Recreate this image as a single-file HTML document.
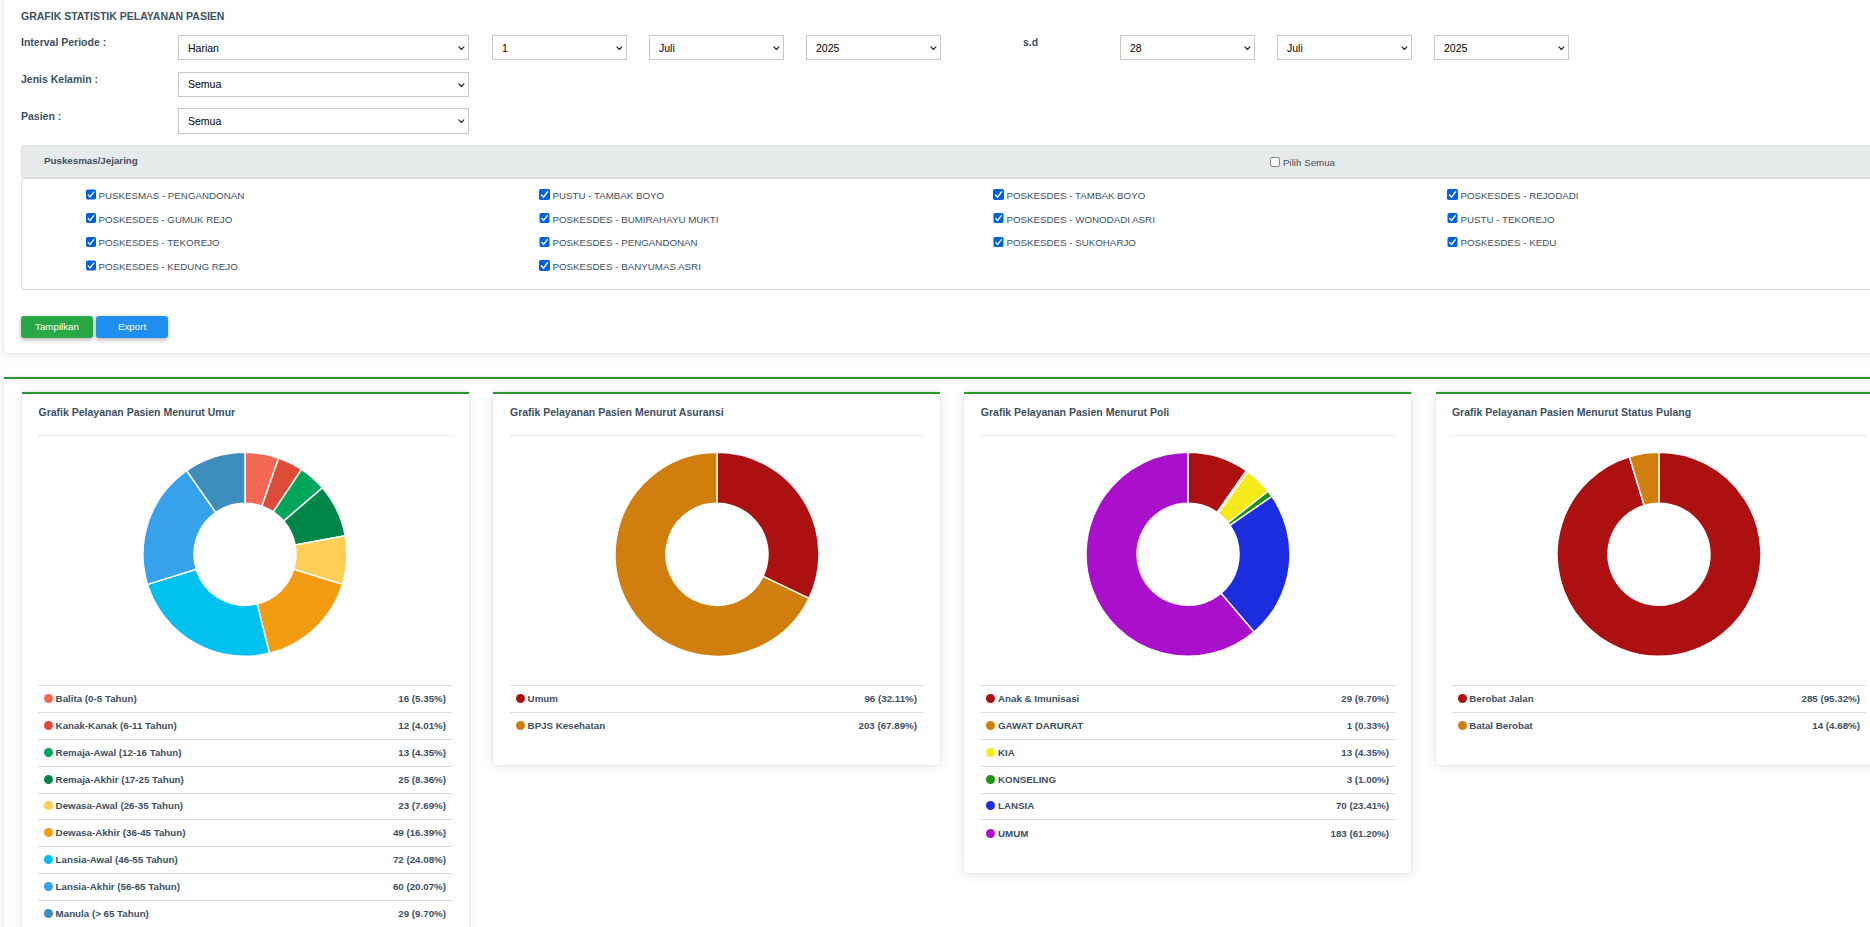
<!DOCTYPE html><html lang="id"><head><meta charset="utf-8"><title>Grafik Statistik Pelayanan Pasien</title><style>*{box-sizing:border-box}
html,body{margin:0;padding:0}
body{width:1870px;height:927px;overflow:hidden;position:relative;background:#fefefe;font-family:"Liberation Sans",sans-serif;font-size:12px;color:#3d4f5f}
#box1{position:absolute;left:3.5px;top:-10px;width:1900px;height:363px;background:#fff;box-shadow:0 0 1px rgba(0,0,0,.22),0 1px 8px rgba(0,0,0,.09)}
#box2{position:absolute;left:3.5px;top:377px;width:1900px;height:700px;background:#fff;border-top:2px solid #2b962b;box-shadow:0 0 1px rgba(0,0,0,.22),0 1px 8px rgba(0,0,0,.09)}
.title{position:absolute;font-size:10.5px;font-weight:bold;color:#3b5263;line-height:14px;white-space:nowrap}
.lbl{position:absolute;font-size:10.5px;font-weight:bold;color:#3d4f5f;line-height:14px;white-space:nowrap}
.sel{position:absolute;height:25px;border:1px solid #c8c8c8;background:#fff;color:#000;font-size:10.5px;line-height:25px;padding-left:9px;white-space:nowrap}
.sel .chev{position:absolute;right:3.5px;top:9.7px}
#phead{position:absolute;left:21px;top:145px;width:1900px;height:33px;background:#e8ebec;border:1px solid #dcdddd;border-radius:3px}
#pbody{position:absolute;left:21px;top:178px;width:1900px;height:112px;background:#fff;border:1px solid #dcdddd;border-radius:3px}
.phl{position:absolute;font-size:9.75px;font-weight:bold;color:#3d4f5f;line-height:13px;white-space:nowrap}
.chk{position:absolute;font-size:9.75px;color:#3d4f5f;line-height:13px;white-space:nowrap;height:13px}
.chk .cb{position:absolute;left:0;top:0}
.chk span{position:absolute;left:13px;top:0}
.btn{position:absolute;height:22px;border-radius:3px;color:#fff;font-size:9.75px;line-height:22px;text-align:center;box-shadow:0 1.5px 3.75px rgba(0,0,0,.18),0 1.5px 7.5px rgba(0,0,0,.14)}
.card{position:absolute;background:#fff;border-top:2px solid #2b962b;box-shadow:0 0 1px rgba(0,0,0,.22),0 1px 12px rgba(0,0,0,.1)}
.ctitle{position:absolute;font-size:10.5px;font-weight:bold;color:#3d4f5f;line-height:14px;white-space:nowrap}
.hr{position:absolute;height:1px;background:#eaeaea}
.donut{position:absolute}
.leg{position:absolute;border-collapse:collapse;font-size:9.75px;font-weight:bold;color:#3d4f5f}
.leg td{height:26.875px;border-top:1px solid #dcdcdc;padding:0 6px 1px 6px;white-space:nowrap;vertical-align:middle}
.leg td.r{text-align:right}
.leg i{display:inline-block;width:9px;height:9px;border-radius:50%;margin-right:2.6px;vertical-align:-1px}
</style></head><body>
<div id="box1"></div>
<div class="title" style="left:21px;top:9px">GRAFIK STATISTIK PELAYANAN PASIEN</div>
<div class="lbl" style="left:21px;top:35px">Interval Periode :</div>
<div class="lbl" style="left:21px;top:72px">Jenis Kelamin :</div>
<div class="lbl" style="left:21px;top:109px">Pasien :</div>
<div class="sel" style="left:178px;top:35px;width:291px"><span>Harian</span><svg class="chev" width="7" height="5" viewBox="0 0 7 5"><path d="M0.9 0.9L3.4 3.5L5.9 0.9" fill="none" stroke="#222" stroke-width="1.15" stroke-linecap="round" stroke-linejoin="round"/></svg></div>
<div class="sel" style="left:178px;top:72px;width:291px;line-height:23px"><span>Semua</span><svg class="chev" width="7" height="5" viewBox="0 0 7 5"><path d="M0.9 0.9L3.4 3.5L5.9 0.9" fill="none" stroke="#222" stroke-width="1.15" stroke-linecap="round" stroke-linejoin="round"/></svg></div>
<div class="sel" style="left:178px;top:108px;width:291px;height:26px"><span>Semua</span><svg class="chev" width="7" height="5" viewBox="0 0 7 5"><path d="M0.9 0.9L3.4 3.5L5.9 0.9" fill="none" stroke="#222" stroke-width="1.15" stroke-linecap="round" stroke-linejoin="round"/></svg></div>
<div class="sel" style="left:492px;top:35px;width:135px"><span>1</span><svg class="chev" width="7" height="5" viewBox="0 0 7 5"><path d="M0.9 0.9L3.4 3.5L5.9 0.9" fill="none" stroke="#222" stroke-width="1.15" stroke-linecap="round" stroke-linejoin="round"/></svg></div>
<div class="sel" style="left:649px;top:35px;width:135px"><span>Juli</span><svg class="chev" width="7" height="5" viewBox="0 0 7 5"><path d="M0.9 0.9L3.4 3.5L5.9 0.9" fill="none" stroke="#222" stroke-width="1.15" stroke-linecap="round" stroke-linejoin="round"/></svg></div>
<div class="sel" style="left:806px;top:35px;width:135px"><span>2025</span><svg class="chev" width="7" height="5" viewBox="0 0 7 5"><path d="M0.9 0.9L3.4 3.5L5.9 0.9" fill="none" stroke="#222" stroke-width="1.15" stroke-linecap="round" stroke-linejoin="round"/></svg></div>
<div class="sel" style="left:1120px;top:35px;width:135px"><span>28</span><svg class="chev" width="7" height="5" viewBox="0 0 7 5"><path d="M0.9 0.9L3.4 3.5L5.9 0.9" fill="none" stroke="#222" stroke-width="1.15" stroke-linecap="round" stroke-linejoin="round"/></svg></div>
<div class="sel" style="left:1277px;top:35px;width:135px"><span>Juli</span><svg class="chev" width="7" height="5" viewBox="0 0 7 5"><path d="M0.9 0.9L3.4 3.5L5.9 0.9" fill="none" stroke="#222" stroke-width="1.15" stroke-linecap="round" stroke-linejoin="round"/></svg></div>
<div class="sel" style="left:1434px;top:35px;width:135px"><span>2025</span><svg class="chev" width="7" height="5" viewBox="0 0 7 5"><path d="M0.9 0.9L3.4 3.5L5.9 0.9" fill="none" stroke="#222" stroke-width="1.15" stroke-linecap="round" stroke-linejoin="round"/></svg></div>
<div class="lbl" style="left:1023px;top:35px">s.d</div>
<div id="pbody"></div><div id="phead"></div>
<div class="phl" style="left:44px;top:154px">Puskesmas/Jejaring</div>
<div class="chk" style="left:1270px;top:157px"><svg class="cb" width="13" height="13" viewBox="0 0 13 13"><g transform="translate(0.00 0.00) scale(0.9091)"><rect x="0.5" y="0.5" width="10" height="10" rx="2" fill="#fff" stroke="#767676"/></g></svg><span style="left:13.00px;top:-1.00px">Pilih Semua</span></div>
<div class="chk" style="left:86px;top:189px"><svg class="cb" width="13" height="13" viewBox="0 0 13 13"><g transform="translate(0.00 0.50) scale(0.9091)"><rect x="0" y="0" width="11" height="11" rx="1.8" fill="#0061e0"/><path d="M2.1 5.6L4.5 8.2L9 2.3" fill="none" stroke="#fff" stroke-width="1.45"/></g></svg><span style="left:12.50px;top:-0.50px">PUSKESMAS - PENGANDONAN</span></div>
<div class="chk" style="left:539px;top:189px"><svg class="cb" width="13" height="13" viewBox="0 0 13 13"><g transform="translate(0.00 0.00) scale(1.0000)"><rect x="0" y="0" width="11" height="11" rx="1.8" fill="#0061e0"/><path d="M2.1 5.6L4.5 8.2L9 2.3" fill="none" stroke="#fff" stroke-width="1.45"/></g></svg><span style="left:13.40px;top:-0.50px">PUSTU - TAMBAK BOYO</span></div>
<div class="chk" style="left:993px;top:189px"><svg class="cb" width="13" height="13" viewBox="0 0 13 13"><g transform="translate(0.00 0.00) scale(1.0000)"><rect x="0" y="0" width="11" height="11" rx="1.8" fill="#0061e0"/><path d="M2.1 5.6L4.5 8.2L9 2.3" fill="none" stroke="#fff" stroke-width="1.45"/></g></svg><span style="left:13.40px;top:-0.50px">POSKESDES - TAMBAK BOYO</span></div>
<div class="chk" style="left:1447px;top:189px"><svg class="cb" width="13" height="13" viewBox="0 0 13 13"><g transform="translate(0.00 0.00) scale(1.0000)"><rect x="0" y="0" width="11" height="11" rx="1.8" fill="#0061e0"/><path d="M2.1 5.6L4.5 8.2L9 2.3" fill="none" stroke="#fff" stroke-width="1.45"/></g></svg><span style="left:13.40px;top:-0.50px">POSKESDES - REJODADI</span></div>
<div class="chk" style="left:86px;top:213px"><svg class="cb" width="13" height="13" viewBox="0 0 13 13"><g transform="translate(0.00 0.00) scale(0.9091)"><rect x="0" y="0" width="11" height="11" rx="1.8" fill="#0061e0"/><path d="M2.1 5.6L4.5 8.2L9 2.3" fill="none" stroke="#fff" stroke-width="1.45"/></g></svg><span style="left:12.50px;top:-0.50px">POSKESDES - GUMUK REJO</span></div>
<div class="chk" style="left:539px;top:213px"><svg class="cb" width="13" height="13" viewBox="0 0 13 13"><g transform="translate(0.50 0.00) scale(0.9091)"><rect x="0" y="0" width="11" height="11" rx="1.8" fill="#0061e0"/><path d="M2.1 5.6L4.5 8.2L9 2.3" fill="none" stroke="#fff" stroke-width="1.45"/></g></svg><span style="left:13.40px;top:-0.50px">POSKESDES - BUMIRAHAYU MUKTI</span></div>
<div class="chk" style="left:993px;top:213px"><svg class="cb" width="13" height="13" viewBox="0 0 13 13"><g transform="translate(0.50 0.00) scale(0.9091)"><rect x="0" y="0" width="11" height="11" rx="1.8" fill="#0061e0"/><path d="M2.1 5.6L4.5 8.2L9 2.3" fill="none" stroke="#fff" stroke-width="1.45"/></g></svg><span style="left:13.40px;top:-0.50px">POSKESDES - WONODADI ASRI</span></div>
<div class="chk" style="left:1447px;top:213px"><svg class="cb" width="13" height="13" viewBox="0 0 13 13"><g transform="translate(0.50 0.00) scale(0.9091)"><rect x="0" y="0" width="11" height="11" rx="1.8" fill="#0061e0"/><path d="M2.1 5.6L4.5 8.2L9 2.3" fill="none" stroke="#fff" stroke-width="1.45"/></g></svg><span style="left:13.40px;top:-0.50px">PUSTU - TEKOREJO</span></div>
<div class="chk" style="left:86px;top:237px"><svg class="cb" width="13" height="13" viewBox="0 0 13 13"><g transform="translate(0.00 0.00) scale(0.9091)"><rect x="0" y="0" width="11" height="11" rx="1.8" fill="#0061e0"/><path d="M2.1 5.6L4.5 8.2L9 2.3" fill="none" stroke="#fff" stroke-width="1.45"/></g></svg><span style="left:12.50px;top:-1.50px">POSKESDES - TEKOREJO</span></div>
<div class="chk" style="left:539px;top:237px"><svg class="cb" width="13" height="13" viewBox="0 0 13 13"><g transform="translate(0.50 0.00) scale(0.9091)"><rect x="0" y="0" width="11" height="11" rx="1.8" fill="#0061e0"/><path d="M2.1 5.6L4.5 8.2L9 2.3" fill="none" stroke="#fff" stroke-width="1.45"/></g></svg><span style="left:13.40px;top:-1.50px">POSKESDES - PENGANDONAN</span></div>
<div class="chk" style="left:993px;top:237px"><svg class="cb" width="13" height="13" viewBox="0 0 13 13"><g transform="translate(0.50 0.00) scale(0.9091)"><rect x="0" y="0" width="11" height="11" rx="1.8" fill="#0061e0"/><path d="M2.1 5.6L4.5 8.2L9 2.3" fill="none" stroke="#fff" stroke-width="1.45"/></g></svg><span style="left:13.40px;top:-1.50px">POSKESDES - SUKOHARJO</span></div>
<div class="chk" style="left:1447px;top:237px"><svg class="cb" width="13" height="13" viewBox="0 0 13 13"><g transform="translate(0.50 0.00) scale(0.9091)"><rect x="0" y="0" width="11" height="11" rx="1.8" fill="#0061e0"/><path d="M2.1 5.6L4.5 8.2L9 2.3" fill="none" stroke="#fff" stroke-width="1.45"/></g></svg><span style="left:13.40px;top:-1.50px">POSKESDES - KEDU</span></div>
<div class="chk" style="left:86px;top:260px"><svg class="cb" width="13" height="13" viewBox="0 0 13 13"><g transform="translate(0.00 0.50) scale(0.9091)"><rect x="0" y="0" width="11" height="11" rx="1.8" fill="#0061e0"/><path d="M2.1 5.6L4.5 8.2L9 2.3" fill="none" stroke="#fff" stroke-width="1.45"/></g></svg><span style="left:12.50px;top:-0.50px">POSKESDES - KEDUNG REJO</span></div>
<div class="chk" style="left:539px;top:260px"><svg class="cb" width="13" height="13" viewBox="0 0 13 13"><g transform="translate(0.00 0.00) scale(1.0000)"><rect x="0" y="0" width="11" height="11" rx="1.8" fill="#0061e0"/><path d="M2.1 5.6L4.5 8.2L9 2.3" fill="none" stroke="#fff" stroke-width="1.45"/></g></svg><span style="left:13.40px;top:-0.50px">POSKESDES - BANYUMAS ASRI</span></div>
<div class="btn" style="left:21px;top:316px;width:72px;background:#28a745">Tampilkan</div>
<div class="btn" style="left:96px;top:316px;width:72px;background:#2090f0">Export</div>
<div id="box2"></div>
<div class="card" style="left:21.75px;top:392px;width:447.25px;height:608px"></div>
<div class="ctitle" style="left:38.5px;top:405px">Grafik Pelayanan Pasien Menurut Umur</div><div class="hr" style="left:38px;top:435px;width:414px"></div>
<svg class="donut" style="left:135px;top:446px" width="220" height="220" viewBox="0 0 220 220">
<path d="M110.00 6.30A102 102 0 0 1 143.65 12.01L126.83 60.16A51 51 0 0 0 110.00 57.30Z" fill="#f56954" stroke="#fff" stroke-width="1.5" stroke-linejoin="bevel"/>
<path d="M143.65 12.01A102 102 0 0 1 166.61 23.45L138.31 65.88A51 51 0 0 0 126.83 60.16Z" fill="#dd4b39" stroke="#fff" stroke-width="1.5" stroke-linejoin="bevel"/>
<path d="M166.61 23.45A102 102 0 0 1 187.40 41.87L148.70 75.09A51 51 0 0 0 138.31 65.88Z" fill="#00a65a" stroke="#fff" stroke-width="1.5" stroke-linejoin="bevel"/>
<path d="M187.40 41.87A102 102 0 0 1 210.28 89.65L160.14 98.98A51 51 0 0 0 148.70 75.09Z" fill="#008548" stroke="#fff" stroke-width="1.5" stroke-linejoin="bevel"/>
<path d="M210.28 89.65A102 102 0 0 1 207.46 138.39L158.73 123.34A51 51 0 0 0 160.14 98.98Z" fill="#ffce56" stroke="#fff" stroke-width="1.5" stroke-linejoin="bevel"/>
<path d="M207.46 138.39A102 102 0 0 1 134.41 207.34L122.21 157.82A51 51 0 0 0 158.73 123.34Z" fill="#f39c12" stroke="#fff" stroke-width="1.5" stroke-linejoin="bevel"/>
<path d="M134.41 207.34A102 102 0 0 1 12.54 138.39L61.27 123.34A51 51 0 0 0 122.21 157.82Z" fill="#00c0ef" stroke="#fff" stroke-width="1.5" stroke-linejoin="bevel"/>
<path d="M12.54 138.39A102 102 0 0 1 51.62 24.66L80.81 66.48A51 51 0 0 0 61.27 123.34Z" fill="#36a2eb" stroke="#fff" stroke-width="1.5" stroke-linejoin="bevel"/>
<path d="M51.62 24.66A102 102 0 0 1 110.00 6.30L110.00 57.30A51 51 0 0 0 80.81 66.48Z" fill="#3c8dbc" stroke="#fff" stroke-width="1.5" stroke-linejoin="bevel"/>
</svg>
<table class="leg" style="left:38px;top:685px;width:414px">
<tr><td><span><i style="background:#f56954"></i>Balita (0-5 Tahun)</span></td><td class="r">16 (5.35%)</td></tr>
<tr><td><span><i style="background:#dd4b39"></i>Kanak-Kanak (6-11 Tahun)</span></td><td class="r">12 (4.01%)</td></tr>
<tr><td><span><i style="background:#00a65a"></i>Remaja-Awal (12-16 Tahun)</span></td><td class="r">13 (4.35%)</td></tr>
<tr><td><span><i style="background:#008548"></i>Remaja-Akhir (17-25 Tahun)</span></td><td class="r">25 (8.36%)</td></tr>
<tr><td><span><i style="background:#ffce56"></i>Dewasa-Awal (26-35 Tahun)</span></td><td class="r">23 (7.69%)</td></tr>
<tr><td><span><i style="background:#f39c12"></i>Dewasa-Akhir (36-45 Tahun)</span></td><td class="r">49 (16.39%)</td></tr>
<tr><td><span><i style="background:#00c0ef"></i>Lansia-Awal (46-55 Tahun)</span></td><td class="r">72 (24.08%)</td></tr>
<tr><td><span><i style="background:#36a2eb"></i>Lansia-Akhir (56-65 Tahun)</span></td><td class="r">60 (20.07%)</td></tr>
<tr><td><span><i style="background:#3c8dbc"></i>Manula (&gt; 65 Tahun)</span></td><td class="r">29 (9.70%)</td></tr>
</table>
<div class="card" style="left:493px;top:392px;width:447px;height:373px"></div>
<div class="ctitle" style="left:510px;top:405px">Grafik Pelayanan Pasien Menurut Asuransi</div><div class="hr" style="left:510px;top:435px;width:413px"></div>
<svg class="donut" style="left:607px;top:446px" width="220" height="220" viewBox="0 0 220 220">
<path d="M110.00 6.30A102 102 0 0 1 202.00 152.35L156.00 130.32A51 51 0 0 0 110.00 57.30Z" fill="#ad1010" stroke="#fff" stroke-width="1.5" stroke-linejoin="bevel"/>
<path d="M202.00 152.35A102 102 0 1 1 110.00 6.30L110.00 57.30A51 51 0 1 0 156.00 130.32Z" fill="#d07f0e" stroke="#fff" stroke-width="1.5" stroke-linejoin="bevel"/>
</svg>
<table class="leg" style="left:510px;top:685px;width:413px">
<tr><td><span><i style="background:#ad1010"></i>Umum</span></td><td class="r">96 (32.11%)</td></tr>
<tr><td><span><i style="background:#d07f0e"></i>BPJS Kesehatan</span></td><td class="r">203 (67.89%)</td></tr>
</table>
<div class="card" style="left:964px;top:392px;width:447px;height:481px"></div>
<div class="ctitle" style="left:980.8px;top:405px">Grafik Pelayanan Pasien Menurut Poli</div><div class="hr" style="left:981px;top:435px;width:414px"></div>
<svg class="donut" style="left:1078px;top:446px" width="220" height="220" viewBox="0 0 220 220">
<path d="M110.00 6.30A102 102 0 0 1 168.38 24.66L139.19 66.48A51 51 0 0 0 110.00 57.30Z" fill="#ad1010" stroke="#fff" stroke-width="1.5" stroke-linejoin="bevel"/>
<path d="M168.38 24.66A102 102 0 0 1 170.13 25.91L140.06 67.10A51 51 0 0 0 139.19 66.48Z" fill="#d07f0e" stroke="#fff" stroke-width="1.5" stroke-linejoin="bevel"/>
<path d="M170.13 25.91A102 102 0 0 1 190.13 45.18L150.06 76.74A51 51 0 0 0 140.06 67.10Z" fill="#f6ea1b" stroke="#fff" stroke-width="1.5" stroke-linejoin="bevel"/>
<path d="M190.13 45.18A102 102 0 0 1 193.94 50.36L151.97 79.33A51 51 0 0 0 150.06 76.74Z" fill="#21910c" stroke="#fff" stroke-width="1.5" stroke-linejoin="bevel"/>
<path d="M193.94 50.36A102 102 0 0 1 176.02 186.05L143.01 147.18A51 51 0 0 0 151.97 79.33Z" fill="#1b2dde" stroke="#fff" stroke-width="1.5" stroke-linejoin="bevel"/>
<path d="M176.02 186.05A102 102 0 1 1 110.00 6.30L110.00 57.30A51 51 0 1 0 143.01 147.18Z" fill="#aa10cc" stroke="#fff" stroke-width="1.5" stroke-linejoin="bevel"/>
</svg>
<table class="leg" style="left:981px;top:685px;width:414px">
<tr><td><span style="position:relative;left:-0.6px"><i style="background:#ad1010"></i>Anak &amp; Imunisasi</span></td><td class="r">29 (9.70%)</td></tr>
<tr><td><span style="position:relative;left:-0.6px"><i style="background:#d07f0e"></i>GAWAT DARURAT</span></td><td class="r">1 (0.33%)</td></tr>
<tr><td><span style="position:relative;left:-0.6px"><i style="background:#f6ea1b"></i>KIA</span></td><td class="r">13 (4.35%)</td></tr>
<tr><td><span style="position:relative;left:-0.6px"><i style="background:#21910c"></i>KONSELING</span></td><td class="r">3 (1.00%)</td></tr>
<tr><td><span style="position:relative;left:-0.6px"><i style="background:#1b2dde"></i>LANSIA</span></td><td class="r">70 (23.41%)</td></tr>
<tr><td><span style="position:relative;left:-0.6px"><i style="background:#aa10cc"></i>UMUM</span></td><td class="r">183 (61.20%)</td></tr>
</table>
<div class="card" style="left:1436px;top:392px;width:447px;height:373px"></div>
<div class="ctitle" style="left:1451.9px;top:405px">Grafik Pelayanan Pasien Menurut Status Pulang</div><div class="hr" style="left:1452px;top:435px;width:414px"></div>
<svg class="donut" style="left:1549px;top:446px" width="220" height="220" viewBox="0 0 220 220">
<path d="M110.00 6.30A102 102 0 1 1 80.42 10.68L95.21 59.49A51 51 0 1 0 110.00 57.30Z" fill="#ad1010" stroke="#fff" stroke-width="1.5" stroke-linejoin="bevel"/>
<path d="M80.42 10.68A102 102 0 0 1 110.00 6.30L110.00 57.30A51 51 0 0 0 95.21 59.49Z" fill="#d07f0e" stroke="#fff" stroke-width="1.5" stroke-linejoin="bevel"/>
</svg>
<table class="leg" style="left:1452px;top:685px;width:414px">
<tr><td><span style="position:relative;left:-0.4px"><i style="background:#ad1010"></i>Berobat Jalan</span></td><td class="r">285 (95.32%)</td></tr>
<tr><td><span style="position:relative;left:-0.4px"><i style="background:#d07f0e"></i>Batal Berobat</span></td><td class="r">14 (4.68%)</td></tr>
</table>
</body></html>
